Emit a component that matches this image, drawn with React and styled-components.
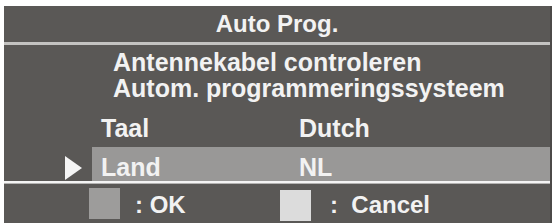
import React from 'react'
import styled, { createGlobalStyle } from 'styled-components'

const GlobalStyle = createGlobalStyle`
    body {
        margin: 0;
        background: #ffffff;
        font-family: "Liberation Sans", Arial, sans-serif;
    }
`

const App = () => {
    return (
        <>
            <GlobalStyle />
            <StyledScreen>
                <StyledPanel>
                    <StyledTitle>Auto Prog.</StyledTitle>
                    <StyledRule />
                    <StyledMessages>
                        <div>Antennekabel controleren</div>
                        <div>Autom. programmeringssysteem</div>
                    </StyledMessages>
                    <StyledRow height="33px" bottom="5px">
                        <StyledPointer />
                        <StyledCells>
                            <StyledLabel>Taal</StyledLabel>
                            <span>Dutch</span>
                        </StyledCells>
                    </StyledRow>
                    <StyledRow height="34px" bottom="0px" selected>
                        <StyledPointer selected />
                        <StyledCells>
                            <StyledLabel>Land</StyledLabel>
                            <span>NL</span>
                        </StyledCells>
                    </StyledRow>
                    <StyledDivider />
                    <StyledFooter>
                        <StyledKey width="191px" gap="15px">
                            <StyledSwatch color="#9d9c9b" top="4px" />
                            <StyledKeyText>: OK</StyledKeyText>
                        </StyledKey>
                        <StyledKey gap="19px">
                            <StyledSwatch color="#dcdcdc" top="6px" />
                            <StyledKeyText>:&nbsp; Cancel</StyledKeyText>
                        </StyledKey>
                    </StyledFooter>
                </StyledPanel>
            </StyledScreen>
        </>
    )
}

const StyledScreen = styled.div`
    width: 554px;
    height: 223px;
    padding: 6px 0 0 4px;
    box-sizing: border-box;
    overflow: hidden;
`

const StyledPanel = styled.div`
    width: 546px;
    display: flex;
    flex-direction: column;
    background: #5a5856;
    border-right: 2px solid #4c4a48;
    color: #f2f2f2;
    font-weight: bold;
`

const StyledTitle = styled.div`
    height: 36px;
    display: flex;
    align-items: center;
    justify-content: center;
    font-size: 24px;
    line-height: 28px;
`

const StyledRule = styled.div`
    height: 3px;
    background: #c4c3c1;
`

const StyledMessages = styled.div`
    height: 69px;
    box-sizing: border-box;
    padding: 4px 0 0 109px;
    font-size: 25px;
    line-height: 26px;
`

const StyledRow = styled.div`
    display: flex;
    height: ${p => p.height};
    padding-left: 61px;
    font-size: 25px;
    line-height: 28px;
    & > div:last-child {
        padding-bottom: ${p => p.bottom};
        background: ${p => (p.selected ? '#999897' : 'transparent')};
    }
`

const StyledPointer = styled.div`
    width: 27px;
    display: flex;
    align-items: flex-end;
    padding-bottom: 1px;
    box-sizing: border-box;
    &::before {
        content: '';
        display: ${p => (p.selected ? 'block' : 'none')};
        border-top: 12.5px solid transparent;
        border-bottom: 12.5px solid transparent;
        border-left: 17px solid #f5f5f5;
    }
`

const StyledCells = styled.div`
    flex: 1;
    display: flex;
    align-items: flex-end;
    padding-left: 9px;
    box-sizing: border-box;
`

const StyledLabel = styled.span`
    width: 198px;
`

const StyledDivider = styled.div`
    height: 3px;
    background: linear-gradient(#f4f4f4 0 2px, #b4b3b2 2px);
`

const StyledFooter = styled.div`
    height: 39px;
    display: flex;
    padding-left: 85px;
    font-size: 24px;
    line-height: 28px;
`

const StyledKey = styled.div`
    display: flex;
    align-items: flex-start;
    gap: ${p => p.gap};
    width: ${p => p.width || 'auto'};
`

const StyledSwatch = styled.div`
    width: 31px;
    height: 31px;
    margin-top: ${p => p.top};
    background: ${p => p.color};
`

const StyledKeyText = styled.span`
    margin-top: 7px;
`

export default App
